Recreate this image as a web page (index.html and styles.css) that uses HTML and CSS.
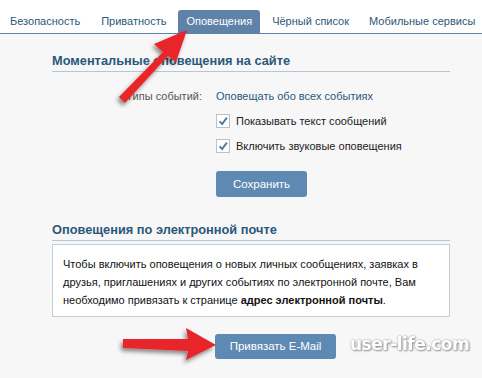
FILE: index.html
```html
<!DOCTYPE html>
<html>
<head>
<meta charset="utf-8">
<link rel="stylesheet" href="styles.css">
</head>
<body>
<div class="page">
  <div class="tabs">
    <div class="tab">Безопасность</div>
    <div class="tab">Приватность</div>
    <div class="tab active">Оповещения</div>
    <div class="tab">Чёрный список</div>
    <div class="tab">Мобильные сервисы</div>
  </div>
  <div class="content">
    <div class="section">
      <div class="sec-title">Моментальные оповещения на сайте</div>
      <div class="form">
        <div class="row">
          <div class="label">Типы событий:</div>
          <div class="value link">Оповещать обо всех событиях</div>
        </div>
        <div class="row">
          <div class="label"></div>
          <div class="value check"><span class="cb"><svg viewBox="0 0 14 14" width="14" height="14"><path d="M3 7.5 L6 10.5 L11.5 3" fill="none" stroke="#4a7aa8" stroke-width="2.2"/></svg></span>Показывать текст сообщений</div>
        </div>
        <div class="row">
          <div class="label"></div>
          <div class="value check"><span class="cb"><svg viewBox="0 0 14 14" width="14" height="14"><path d="M3 7.5 L6 10.5 L11.5 3" fill="none" stroke="#4a7aa8" stroke-width="2.2"/></svg></span>Включить звуковые оповещения</div>
        </div>
        <div class="row btn-row">
          <div class="label"></div>
          <div class="value"><div class="btn save">Сохранить</div></div>
        </div>
      </div>
    </div>
    <div class="section second">
      <div class="sec-title">Оповещения по электронной почте</div>
      <div class="info">Чтобы включить оповещения о новых личных сообщениях, заявках в друзья, приглашениях и других событиях по электронной почте, Вам необходимо привязать к странице <b>адрес электронной почты</b>.</div>
      <div class="btn-line"><div class="btn mail">Привязать E-Mail</div></div>
    </div>
  </div>
  <div class="watermark">user-life.com</div>
  <svg class="arrows" width="482" height="378" viewBox="0 0 482 378">
    <defs>
      <filter id="sh" x="-20%" y="-20%" width="140%" height="140%">
        <feDropShadow dx="-2" dy="3" stdDeviation="2" flood-color="#000" flood-opacity="0.45"/>
      </filter>
    </defs>
    <g filter="url(#sh)" fill="#e8262b">
      <polygon points="119,97 163,52 154,44 187,30 176,62 168,56 125,103"/>
      <polygon points="123,339 188,339 186,328 216,345 186,360 188,351 123,348"/>
    </g>
  </svg>
</div>
</body>
</html>
```

FILE: styles.css
```css
* { box-sizing: border-box; }
body {
  margin: 0;
  font-family: "Liberation Sans", Arial, sans-serif;
  font-size: 11px;
  color: #000;
  background: #f7f7f7;
}
.page {
  position: relative;
  width: 482px;
  height: 378px;
  overflow: hidden;
  background: #f7f7f7;
}
.tabs {
  display: flex;
  align-items: flex-end;
  height: 34px;
  padding-left: 2px;
  background: #fff;
  border-bottom: 1px solid #5e82a8;
}
.tab {
  height: 23px;
  padding: 0 8px;
  margin-right: 4px;
  line-height: 23px;
  color: #2b587a;
  border-radius: 3px 3px 0 0;
  white-space: nowrap;
  font-size: 11px;
}
.tab:nth-child(1) { margin-right: 5px; }
.tab.active {
  background: #5e82a8;
  color: #fff;
}
.content {
  padding: 19px 32px 0 52px;
}
.sec-title {
  font-weight: bold;
  font-size: 12.8px;
  color: #2b587a;
  padding-bottom: 3px;
  border-bottom: 1px solid #b6c6d8;
}
.form {
  padding-top: 12px;
}
.row {
  display: flex;
  align-items: center;
  height: 24px;
}
.row + .row { height: 25px; }
.label {
  width: 164px;
  text-align: right;
  padding-right: 14px;
  color: #555;
}
.value { color: #222; }
.link { color: #2b587a; }
.check { display: flex; align-items: center; }
.cb {
  display: inline-flex;
  width: 14px;
  height: 14px;
  border: 1px solid #b7c2cc;
  background: #fff;
  margin-right: 6px;
  align-items: center;
  justify-content: center;
}
.cb svg { display: block; }
.row.btn-row { height: auto; padding-top: 13px; }
.btn {
  background: #5e89b2;
  color: #fff;
  border-radius: 3px;
  text-align: center;
  font-size: 11.5px;
}
.save { width: 91px; height: 26px; line-height: 26px; }
.second { padding-top: 25px; }
.info {
  margin-top: 3px;
  background: #fff;
  border: 1px solid #c5cdd6;
  padding: 10px 10px 7px 10px;
  line-height: 18px;
  color: #111;
}
.btn-line { padding: 17px 0 0 163px; }
.mail { width: 121px; height: 25px; line-height: 25px; }
.watermark {
  position: absolute;
  left: 350px;
  top: 334px;
  white-space: nowrap;
  font-family: "DejaVu Sans", sans-serif;
  font-weight: bold;
  font-size: 17px;
  color: #fff;
  letter-spacing: -0.5px;
  text-shadow: 0 0 2px #888, 1px 1px 2px #888;
  opacity: 0.9;
}
.arrows {
  position: absolute;
  left: 0;
  top: 0;
  pointer-events: none;
}
```
